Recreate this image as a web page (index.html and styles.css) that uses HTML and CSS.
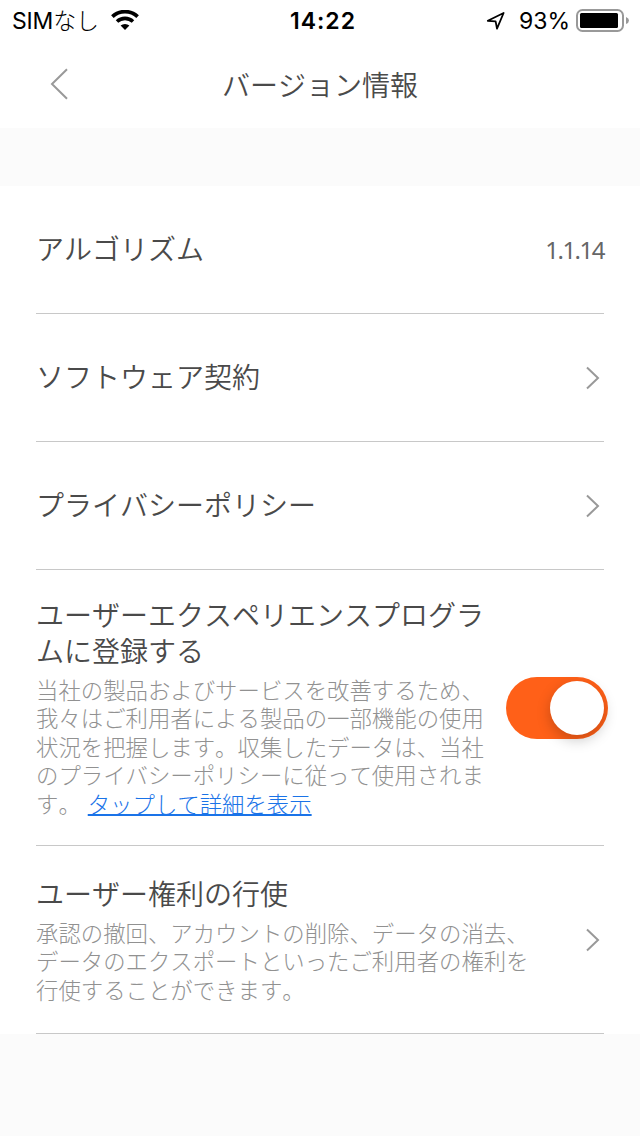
FILE: index.html
```html
<!DOCTYPE html>
<html lang="ja">
<head>
    <meta charset="UTF-8">
    <meta name="viewport" content="width=device-width, initial-scale=1.0">
    <title>バージョン情報</title>
    <link rel="stylesheet" href="styles.css">
</head>
<body>

    <div class="status-bar">
        <div class="status-left">
            <span class="carrier">SIM<span class="kana">なし</span></span>
            <svg class="wifi" width="28" height="20" viewBox="0 0 28 20">
                <path d="M1.4 6.6 A18.5 18.5 0 0 1 26.6 6.6" fill="none" stroke="#000" stroke-width="3.8"/>
                <path d="M6 11.5 A11.8 11.8 0 0 1 22 11.5" fill="none" stroke="#000" stroke-width="3.6"/>
                <path d="M9.6 15.6 A6.5 6.5 0 0 1 18.4 15.6 L14 20 Z"/>
            </svg>
        </div>
        <div class="clock">14:22</div>
        <div class="status-right">
            <svg class="location" width="20" height="20" viewBox="0 0 20 20">
                <path d="M1.8 9.8 L17.6 2 L11 17.6 L9.6 10.4 Z" fill="none" stroke="#000" stroke-width="1.8" stroke-linejoin="round"/>
            </svg>
            <span class="percent">93%</span>
            <svg class="battery" width="54" height="24" viewBox="0 0 54 24">
                <rect x="1" y="1" width="46" height="21" rx="5.5" fill="none" stroke="#999" stroke-width="2"/>
                <rect x="4" y="4" width="38" height="15" rx="1.5"/>
                <path d="M50 8 Q53 9.2 53 11.5 Q53 13.8 50 15 Z" fill="#999"/>
            </svg>
        </div>
    </div>

    <header class="navbar">
        <svg class="back" width="18" height="32" viewBox="0 0 18 32">
            <path d="M17 1.2 L2 16 L17 30.8"/>
        </svg>
        <h1>バージョン情報</h1>
    </header>

    <main class="list">
        <div class="row">
            <div class="label">アルゴリズム</div>
            <div class="version">1.1.14</div>
        </div>
        <div class="row">
            <div class="label">ソフトウェア契約</div>
            <svg class="arrow" width="14" height="24" viewBox="0 0 14 24"><path d="M1 1.5 L12 12 L1 22.5"/></svg>
        </div>
        <div class="row">
            <div class="label">プライバシーポリシー</div>
            <svg class="arrow" width="14" height="24" viewBox="0 0 14 24"><path d="M1 1.5 L12 12 L1 22.5"/></svg>
        </div>
        <div class="row row-program">
            <div class="text">
                <div class="label">ユーザーエクスペリエンスプログラ<br>ムに登録する</div>
                <p class="desc">当社の製品およびサービスを改善するため、<br>我々はご利用者による製品の一部機能の使用<br>状況を把握します。収集したデータは、当社<br>のプライバシーポリシーに従って使用されま<br>す。 <a href="#">タップして詳細を表示</a></p>
            </div>
            <div class="switch"><div class="knob"></div></div>
        </div>
        <div class="row row-rights">
            <div class="text">
                <div class="label">ユーザー権利の行使</div>
                <p class="desc">承認の撤回、アカウントの削除、データの消去、<br>データのエクスポートといったご利用者の権利を<br>行使することができます。</p>
            </div>
            <svg class="arrow" width="14" height="24" viewBox="0 0 14 24"><path d="M1 1.5 L12 12 L1 22.5"/></svg>
        </div>
    </main>

</body>
</html>
```
FILE: styles.css
```css
* {
    box-sizing: border-box;
}
body {
    margin: 0;
    min-height: 1136px;
    background: #fbfbfb;
    font-family: "Noto Sans CJK JP", sans-serif;
    font-weight: 350;
    font-kerning: none;
    color: #4a4a4a;
}
.status-bar {
    display: grid;
    grid-template-columns: 1fr auto 1fr;
    align-items: center;
    height: 40px;
    background: #fff;
    padding: 1px 11px 0 12px;
    color: #000;
    font-family: Inter, "Noto Sans CJK JP", sans-serif;
    font-size: 23px;
    font-weight: 400;
    line-height: 39px;
}
.status-left,
.status-right {
    display: flex;
    align-items: center;
}
.status-left {
    gap: 12px;
}
.carrier {
    padding-top: 1px;
    letter-spacing: -0.2px;
}
.wifi {
    margin-top: -2px;
}
.kana {
    font-weight: 300;
}
.clock {
    padding: 1px 0 0 5px;
    font-weight: 600;
    letter-spacing: 1px;
}
.status-right {
    justify-content: flex-end;
    margin-right: -1px;
}
.location {
    margin-top: -1px;
}
.percent {
    margin: 1px 6px 0 13px;
}
.battery {
    margin-top: -1px;
}
.navbar {
    display: grid;
    grid-template-columns: 50px 1fr 50px;
    align-items: center;
    height: 88px;
    background: #fff;
}
.back {
    margin-left: 50px;
}
.back path,
.arrow path {
    fill: none;
    stroke: #999;
    stroke-width: 2;
}
h1 {
    margin: 0;
    padding-bottom: 1px;
    font-size: 28px;
    font-weight: 350;
    line-height: 40px;
    text-align: center;
}
.list {
    margin-top: 58px;
    padding: 0 36px;
    background: #fff;
}
.row {
    display: flex;
    justify-content: space-between;
    align-items: center;
    height: 128px;
    border-bottom: 1px solid #c8c8c8;
}
.label {
    padding-bottom: 3px;
    font-size: 28px;
    line-height: 36px;
    white-space: nowrap;
}
.version {
    color: #666;
    font-family: "Noto Sans", sans-serif;
    font-size: 24px;
    font-weight: 400;
    letter-spacing: -1.5px;
}
.arrow {
    margin-right: 4px;
}
.desc {
    margin: 4px 0 0;
    color: #919191;
    font-size: 22.4px;
    font-weight: 300;
    line-height: 28.5px;
    white-space: nowrap;
}
.desc a {
    margin-left: 2px;
    color: #1a73e8;
    text-decoration: underline;
    text-decoration-thickness: 2px;
    text-underline-offset: 1px;
}
.row-program {
    height: 276px;
}
.row-program .text {
    padding-bottom: 2px;
}
.row-rights {
    height: 188px;
}
.row-rights .text {
    padding-bottom: 1px;
}
.switch {
    display: flex;
    justify-content: flex-end;
    align-items: center;
    width: 102px;
    height: 62px;
    margin-right: -4px;
    padding-right: 4px;
    border-radius: 31px;
    background: #ff6018;
}
.knob {
    width: 54px;
    height: 54px;
    border-radius: 50%;
    background: #fff;
    box-shadow: 0 5px 14px rgba(0, 0, 0, 0.22);
}
```
